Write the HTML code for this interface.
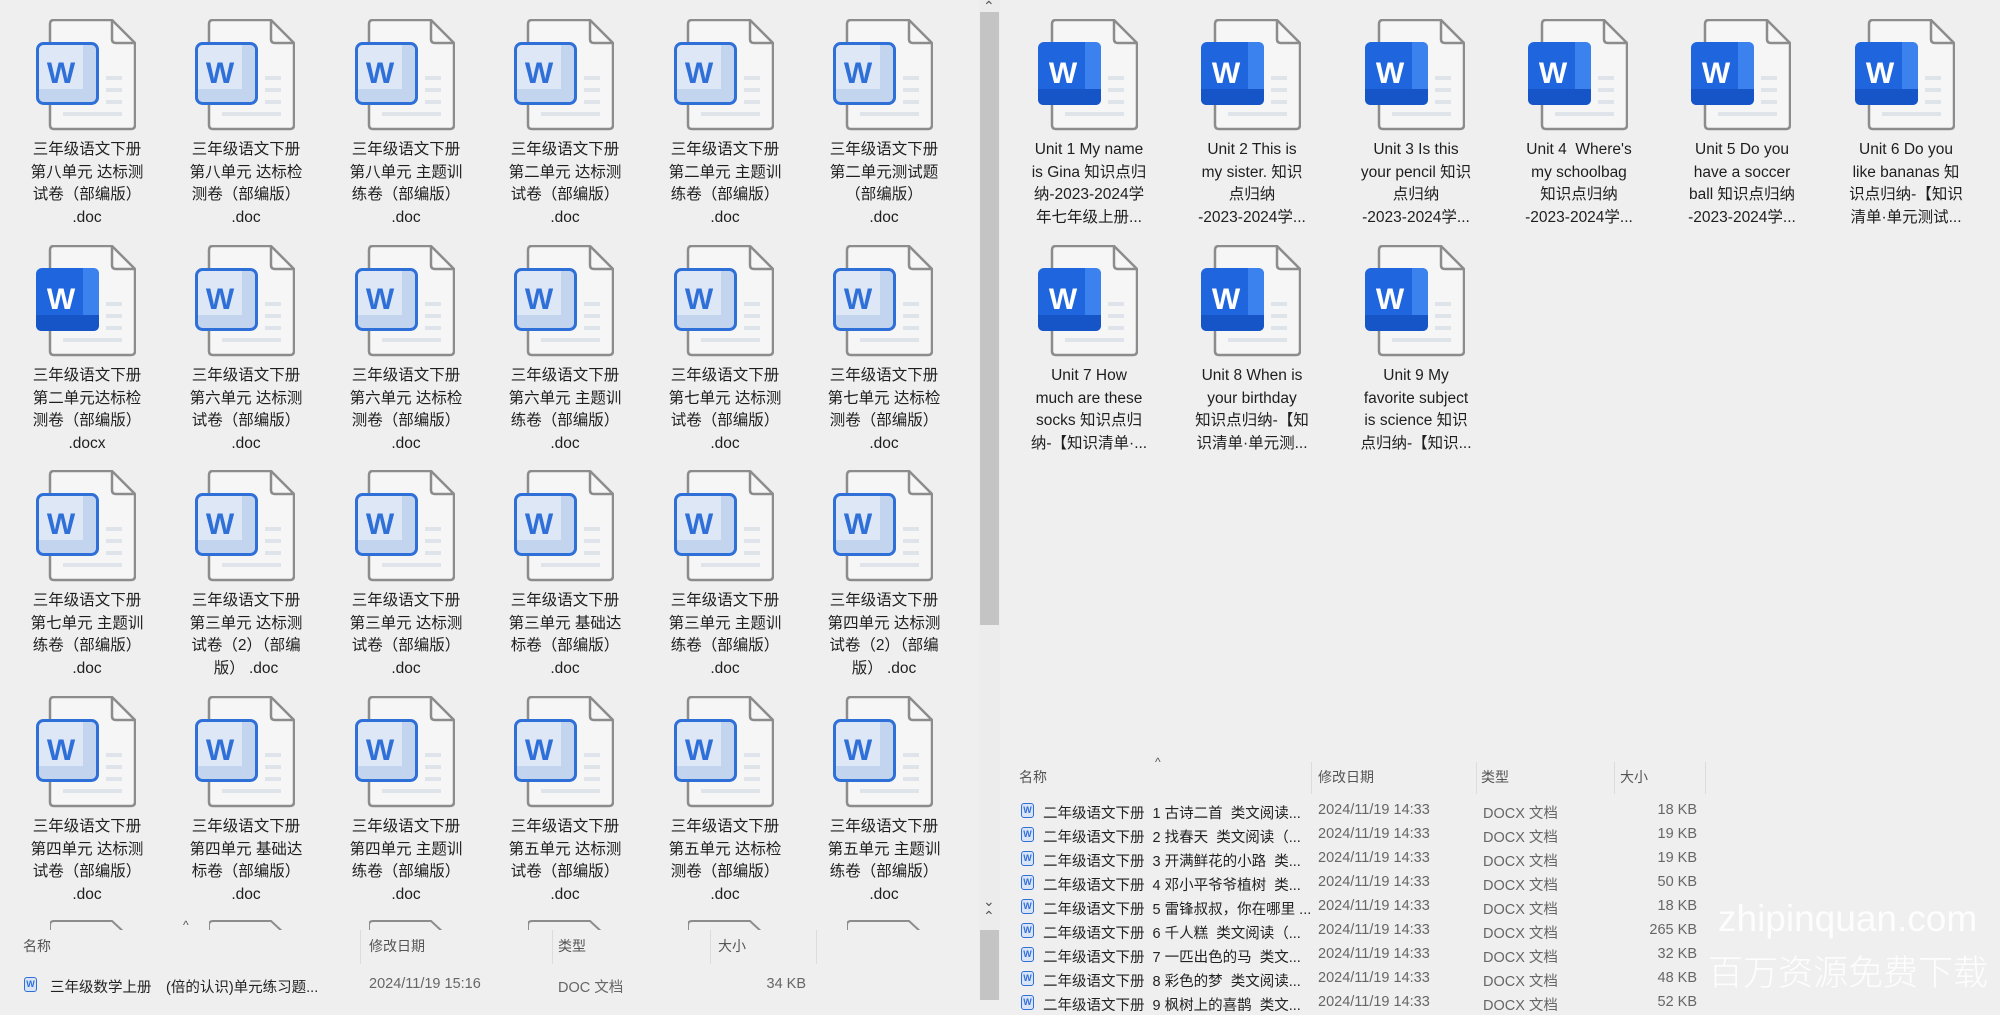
<!DOCTYPE html>
<html><head><meta charset="utf-8">
<style>
*{margin:0;padding:0;box-sizing:border-box}
body{width:2000px;height:1000px;background:#efefef;position:relative;overflow:hidden;font-family:"Liberation Sans","Noto Sans CJK SC",sans-serif;color:#222}
.it{position:absolute;width:160px}
.it svg{position:absolute;left:29px;top:0;width:100px;height:112px}
.it .w{position:absolute;left:29px;top:38px;width:50px;text-align:center;font:bold 30px "Liberation Sans",sans-serif;color:#2f6fd8}
.it.f .w{color:#fff}
.it .t{position:absolute;top:120px;left:0;width:160px;text-align:center;font-size:15.5px;line-height:22.5px;color:#1e1e1e;white-space:nowrap}
.abs{position:absolute;white-space:nowrap}
.hd{font-size:14px;color:#555}
.row{font-size:14.5px;color:#222}
.gray{color:#666}
.si{position:absolute;width:13px;height:15px;border:1.5px solid #2f6fd8;border-radius:3px;background:#d9e5f7;font:bold 9px "Liberation Sans",sans-serif;color:#2f6fd8;text-align:center;line-height:12px}
.vd{position:absolute;width:1px;background:#dcdcdc}
.pt{position:absolute;top:2px;width:86px;height:14px}
</style></head><body>
<svg width="0" height="0" style="position:absolute">
<defs>
<symbol id="doc" viewBox="0 0 100 112"><path d="M18,1H76L99,24V106Q99,110 95,110H18Q14,110 14,106V5Q14,1 18,1Z" fill="#f6f6f6" stroke="#8c8c8c" stroke-width="2.5"/><path d="M76,1V20Q76,24 80,24H99" fill="none" stroke="#8c8c8c" stroke-width="2.5"/><g stroke="#dfe3ea" stroke-width="4"><line x1="70" y1="59" x2="86" y2="59"/><line x1="70" y1="71" x2="86" y2="71"/><line x1="70" y1="83" x2="86" y2="83"/><line x1="27" y1="95" x2="86" y2="95"/></g></symbol>
<symbol id="o" viewBox="0 0 100 112"><use href="#doc"/><rect x="1.5" y="24.5" width="60" height="60" rx="6" fill="#dde7f6"/><rect x="47" y="26" width="13" height="57" fill="#c3d4ef"/><rect x="3" y="70" width="57" height="13" fill="#c3d4ef"/><rect x="1.5" y="24.5" width="60" height="60" rx="6" fill="none" stroke="#2f6fd8" stroke-width="3"/></symbol>
<symbol id="fl" viewBox="0 0 100 112"><use href="#doc"/><rect x="0" y="23" width="63" height="63" rx="6" fill="#1f66de"/><path d="M47,23H57Q63,23 63,29V80Q63,86 57,86H47Z" fill="#3c82ee"/><path d="M0,70H63V80Q63,86 57,86H6Q0,86 0,80Z" fill="#1655c8"/></symbol>
</defs></svg>

<!-- scrollbar left -->
<div style="position:absolute;left:979px;top:0;width:21px;height:1000px;background:#ececec"></div>
<div style="position:absolute;left:980px;top:12px;width:19px;height:613px;background:#c4c4c4"></div>
<div class="abs" style="left:983px;top:-2px;font-size:14px;color:#555">&#8963;</div>
<div class="abs" style="left:983px;top:893px;font-size:14px;color:#555">&#8964;</div>
<div class="abs" style="left:983px;top:908px;font-size:14px;color:#555">&#8963;</div>
<div style="position:absolute;left:980px;top:930px;width:19px;height:70px;background:#c4c4c4"></div>

<!-- row 1 -->
<div class="it" style="left:7px;top:19px"><svg><use href="#o"/></svg><div class="w">W</div><div class="t">三年级语文下册<br>第八单元 达标测<br>试卷（部编版）<br>.doc</div></div>
<div class="it" style="left:166px;top:19px"><svg><use href="#o"/></svg><div class="w">W</div><div class="t">三年级语文下册<br>第八单元 达标检<br>测卷（部编版）<br>.doc</div></div>
<div class="it" style="left:326px;top:19px"><svg><use href="#o"/></svg><div class="w">W</div><div class="t">三年级语文下册<br>第八单元 主题训<br>练卷（部编版）<br>.doc</div></div>
<div class="it" style="left:485px;top:19px"><svg><use href="#o"/></svg><div class="w">W</div><div class="t">三年级语文下册<br>第二单元 达标测<br>试卷（部编版）<br>.doc</div></div>
<div class="it" style="left:645px;top:19px"><svg><use href="#o"/></svg><div class="w">W</div><div class="t">三年级语文下册<br>第二单元 主题训<br>练卷（部编版）<br>.doc</div></div>
<div class="it" style="left:804px;top:19px"><svg><use href="#o"/></svg><div class="w">W</div><div class="t">三年级语文下册<br>第二单元测试题<br>（部编版）<br>.doc</div></div>
<!-- row 2 -->
<div class="it f" style="left:7px;top:245px"><svg><use href="#fl"/></svg><div class="w">W</div><div class="t">三年级语文下册<br>第二单元达标检<br>测卷（部编版）<br>.docx</div></div>
<div class="it" style="left:166px;top:245px"><svg><use href="#o"/></svg><div class="w">W</div><div class="t">三年级语文下册<br>第六单元 达标测<br>试卷（部编版）<br>.doc</div></div>
<div class="it" style="left:326px;top:245px"><svg><use href="#o"/></svg><div class="w">W</div><div class="t">三年级语文下册<br>第六单元 达标检<br>测卷（部编版）<br>.doc</div></div>
<div class="it" style="left:485px;top:245px"><svg><use href="#o"/></svg><div class="w">W</div><div class="t">三年级语文下册<br>第六单元 主题训<br>练卷（部编版）<br>.doc</div></div>
<div class="it" style="left:645px;top:245px"><svg><use href="#o"/></svg><div class="w">W</div><div class="t">三年级语文下册<br>第七单元 达标测<br>试卷（部编版）<br>.doc</div></div>
<div class="it" style="left:804px;top:245px"><svg><use href="#o"/></svg><div class="w">W</div><div class="t">三年级语文下册<br>第七单元 达标检<br>测卷（部编版）<br>.doc</div></div>
<!-- row 3 -->
<div class="it" style="left:7px;top:470px"><svg><use href="#o"/></svg><div class="w">W</div><div class="t">三年级语文下册<br>第七单元 主题训<br>练卷（部编版）<br>.doc</div></div>
<div class="it" style="left:166px;top:470px"><svg><use href="#o"/></svg><div class="w">W</div><div class="t">三年级语文下册<br>第三单元 达标测<br>试卷（2）（部编<br>版） .doc</div></div>
<div class="it" style="left:326px;top:470px"><svg><use href="#o"/></svg><div class="w">W</div><div class="t">三年级语文下册<br>第三单元 达标测<br>试卷（部编版）<br>.doc</div></div>
<div class="it" style="left:485px;top:470px"><svg><use href="#o"/></svg><div class="w">W</div><div class="t">三年级语文下册<br>第三单元 基础达<br>标卷（部编版）<br>.doc</div></div>
<div class="it" style="left:645px;top:470px"><svg><use href="#o"/></svg><div class="w">W</div><div class="t">三年级语文下册<br>第三单元 主题训<br>练卷（部编版）<br>.doc</div></div>
<div class="it" style="left:804px;top:470px"><svg><use href="#o"/></svg><div class="w">W</div><div class="t">三年级语文下册<br>第四单元 达标测<br>试卷（2）（部编<br>版） .doc</div></div>
<!-- row 4 -->
<div class="it" style="left:7px;top:696px"><svg><use href="#o"/></svg><div class="w">W</div><div class="t">三年级语文下册<br>第四单元 达标测<br>试卷（部编版）<br>.doc</div></div>
<div class="it" style="left:166px;top:696px"><svg><use href="#o"/></svg><div class="w">W</div><div class="t">三年级语文下册<br>第四单元 基础达<br>标卷（部编版）<br>.doc</div></div>
<div class="it" style="left:326px;top:696px"><svg><use href="#o"/></svg><div class="w">W</div><div class="t">三年级语文下册<br>第四单元 主题训<br>练卷（部编版）<br>.doc</div></div>
<div class="it" style="left:485px;top:696px"><svg><use href="#o"/></svg><div class="w">W</div><div class="t">三年级语文下册<br>第五单元 达标测<br>试卷（部编版）<br>.doc</div></div>
<div class="it" style="left:645px;top:696px"><svg><use href="#o"/></svg><div class="w">W</div><div class="t">三年级语文下册<br>第五单元 达标检<br>测卷（部编版）<br>.doc</div></div>
<div class="it" style="left:804px;top:696px"><svg><use href="#o"/></svg><div class="w">W</div><div class="t">三年级语文下册<br>第五单元 主题训<br>练卷（部编版）<br>.doc</div></div>

<!-- row 5 partial tops -->
<div style="position:absolute;left:0;top:918px;width:979px;height:14px">
<svg class="pt" style="left:50px" viewBox="0 0 86 14"><path d="M0,14V5Q0,1 4,1H62L76,14" fill="none" stroke="#8c8c8c" stroke-width="2"/></svg>
<svg class="pt" style="left:209px" viewBox="0 0 86 14"><path d="M0,14V5Q0,1 4,1H62L76,14" fill="none" stroke="#8c8c8c" stroke-width="2"/></svg>
<svg class="pt" style="left:369px" viewBox="0 0 86 14"><path d="M0,14V5Q0,1 4,1H62L76,14" fill="none" stroke="#8c8c8c" stroke-width="2"/></svg>
<svg class="pt" style="left:528px" viewBox="0 0 86 14"><path d="M0,14V5Q0,1 4,1H62L76,14" fill="none" stroke="#8c8c8c" stroke-width="2"/></svg>
<svg class="pt" style="left:688px" viewBox="0 0 86 14"><path d="M0,14V5Q0,1 4,1H62L76,14" fill="none" stroke="#8c8c8c" stroke-width="2"/></svg>
<svg class="pt" style="left:847px" viewBox="0 0 86 14"><path d="M0,14V5Q0,1 4,1H62L76,14" fill="none" stroke="#8c8c8c" stroke-width="2"/></svg>
</div>
<!-- left details pane -->
<div style="position:absolute;left:0;top:930px;width:979px;height:70px;background:#efefef"></div>
<div class="abs hd" style="left:183px;top:918px;font-size:12px">^</div>
<div class="abs hd" style="left:23px;top:936px">名称</div>
<div class="vd" style="left:360px;top:930px;height:34px"></div>
<div class="abs hd" style="left:369px;top:936px">修改日期</div>
<div class="vd" style="left:552px;top:930px;height:34px"></div>
<div class="abs hd" style="left:558px;top:936px">类型</div>
<div class="vd" style="left:710px;top:930px;height:34px"></div>
<div class="abs hd" style="left:718px;top:936px">大小</div>
<div class="vd" style="left:816px;top:930px;height:34px"></div>
<div class="si" style="left:24px;top:977px">W</div>
<div class="abs row" style="left:50px;top:976px">三年级数学上册　(倍的认识)单元练习题...</div>
<div class="abs row gray" style="left:369px;top:976px">2024/11/19 15:16</div>
<div class="abs row gray" style="left:558px;top:976px">DOC 文档</div>
<div class="abs row gray" style="left:706px;top:976px;width:100px;text-align:right">34 KB</div>

<!-- RIGHT GRID -->
<div class="it f" style="left:1009px;top:19px"><svg><use href="#fl"/></svg><div class="w">W</div><div class="t">Unit 1 My name<br>is Gina 知识点归<br>纳-2023-2024学<br>年七年级上册...</div></div>
<div class="it f" style="left:1172px;top:19px"><svg><use href="#fl"/></svg><div class="w">W</div><div class="t">Unit 2 This is<br>my sister. 知识<br>点归纳<br>-2023-2024学...</div></div>
<div class="it f" style="left:1336px;top:19px"><svg><use href="#fl"/></svg><div class="w">W</div><div class="t">Unit 3 Is this<br>your pencil 知识<br>点归纳<br>-2023-2024学...</div></div>
<div class="it f" style="left:1499px;top:19px"><svg><use href="#fl"/></svg><div class="w">W</div><div class="t">Unit 4&nbsp; Where's<br>my schoolbag<br>知识点归纳<br>-2023-2024学...</div></div>
<div class="it f" style="left:1662px;top:19px"><svg><use href="#fl"/></svg><div class="w">W</div><div class="t">Unit 5 Do you<br>have a soccer<br>ball 知识点归纳<br>-2023-2024学...</div></div>
<div class="it f" style="left:1826px;top:19px"><svg><use href="#fl"/></svg><div class="w">W</div><div class="t">Unit 6 Do you<br>like bananas 知<br>识点归纳-【知识<br>清单·单元测试...</div></div>
<div class="it f" style="left:1009px;top:245px"><svg><use href="#fl"/></svg><div class="w">W</div><div class="t">Unit 7 How<br>much are these<br>socks 知识点归<br>纳-【知识清单·...</div></div>
<div class="it f" style="left:1172px;top:245px"><svg><use href="#fl"/></svg><div class="w">W</div><div class="t">Unit 8 When is<br>your birthday<br>知识点归纳-【知<br>识清单·单元测...</div></div>
<div class="it f" style="left:1336px;top:245px"><svg><use href="#fl"/></svg><div class="w">W</div><div class="t">Unit 9 My<br>favorite subject<br>is science 知识<br>点归纳-【知识...</div></div>

<!-- right details -->
<div class="abs hd" style="left:1155px;top:755px;font-size:12px">^</div>
<div class="abs hd" style="left:1019px;top:767px">名称</div>
<div class="vd" style="left:1311px;top:762px;height:32px"></div>
<div class="abs hd" style="left:1318px;top:767px">修改日期</div>
<div class="vd" style="left:1476px;top:762px;height:32px"></div>
<div class="abs hd" style="left:1481px;top:767px">类型</div>
<div class="vd" style="left:1614px;top:762px;height:32px"></div>
<div class="abs hd" style="left:1620px;top:767px">大小</div>
<div class="vd" style="left:1705px;top:762px;height:32px"></div>

<div class="si" style="left:1021px;top:803px">W</div><div class="abs row" style="left:1043px;top:802px">二年级语文下册&nbsp; 1 古诗二首&nbsp; 类文阅读...</div><div class="abs row gray" style="left:1318px;top:802px">2024/11/19 14:33</div><div class="abs row gray" style="left:1483px;top:802px">DOCX 文档</div><div class="abs row gray" style="left:1597px;top:802px;width:100px;text-align:right">18 KB</div>
<div class="si" style="left:1021px;top:827px">W</div><div class="abs row" style="left:1043px;top:826px">二年级语文下册&nbsp; 2 找春天&nbsp; 类文阅读（...</div><div class="abs row gray" style="left:1318px;top:826px">2024/11/19 14:33</div><div class="abs row gray" style="left:1483px;top:826px">DOCX 文档</div><div class="abs row gray" style="left:1597px;top:826px;width:100px;text-align:right">19 KB</div>
<div class="si" style="left:1021px;top:851px">W</div><div class="abs row" style="left:1043px;top:850px">二年级语文下册&nbsp; 3 开满鲜花的小路&nbsp; 类...</div><div class="abs row gray" style="left:1318px;top:850px">2024/11/19 14:33</div><div class="abs row gray" style="left:1483px;top:850px">DOCX 文档</div><div class="abs row gray" style="left:1597px;top:850px;width:100px;text-align:right">19 KB</div>
<div class="si" style="left:1021px;top:875px">W</div><div class="abs row" style="left:1043px;top:874px">二年级语文下册&nbsp; 4 邓小平爷爷植树&nbsp; 类...</div><div class="abs row gray" style="left:1318px;top:874px">2024/11/19 14:33</div><div class="abs row gray" style="left:1483px;top:874px">DOCX 文档</div><div class="abs row gray" style="left:1597px;top:874px;width:100px;text-align:right">50 KB</div>
<div class="si" style="left:1021px;top:899px">W</div><div class="abs row" style="left:1043px;top:898px">二年级语文下册&nbsp; 5 雷锋叔叔，你在哪里 ...</div><div class="abs row gray" style="left:1318px;top:898px">2024/11/19 14:33</div><div class="abs row gray" style="left:1483px;top:898px">DOCX 文档</div><div class="abs row gray" style="left:1597px;top:898px;width:100px;text-align:right">18 KB</div>
<div class="si" style="left:1021px;top:923px">W</div><div class="abs row" style="left:1043px;top:922px">二年级语文下册&nbsp; 6 千人糕&nbsp; 类文阅读（...</div><div class="abs row gray" style="left:1318px;top:922px">2024/11/19 14:33</div><div class="abs row gray" style="left:1483px;top:922px">DOCX 文档</div><div class="abs row gray" style="left:1597px;top:922px;width:100px;text-align:right">265 KB</div>
<div class="si" style="left:1021px;top:947px">W</div><div class="abs row" style="left:1043px;top:946px">二年级语文下册&nbsp; 7 一匹出色的马&nbsp; 类文...</div><div class="abs row gray" style="left:1318px;top:946px">2024/11/19 14:33</div><div class="abs row gray" style="left:1483px;top:946px">DOCX 文档</div><div class="abs row gray" style="left:1597px;top:946px;width:100px;text-align:right">32 KB</div>
<div class="si" style="left:1021px;top:971px">W</div><div class="abs row" style="left:1043px;top:970px">二年级语文下册&nbsp; 8 彩色的梦&nbsp; 类文阅读...</div><div class="abs row gray" style="left:1318px;top:970px">2024/11/19 14:33</div><div class="abs row gray" style="left:1483px;top:970px">DOCX 文档</div><div class="abs row gray" style="left:1597px;top:970px;width:100px;text-align:right">48 KB</div>
<div class="si" style="left:1021px;top:995px">W</div><div class="abs row" style="left:1043px;top:994px">二年级语文下册&nbsp; 9 枫树上的喜鹊&nbsp; 类文...</div><div class="abs row gray" style="left:1318px;top:994px">2024/11/19 14:33</div><div class="abs row gray" style="left:1483px;top:994px">DOCX 文档</div><div class="abs row gray" style="left:1597px;top:994px;width:100px;text-align:right">52 KB</div>

<!-- watermark -->
<div class="abs" style="left:1718px;top:898px;font-size:37px;color:#ffffff;opacity:.9;font-family:'Liberation Sans',sans-serif">zhipinquan.com</div>
<div class="abs" style="left:1708px;top:945px;font-size:35px;color:#ffffff;opacity:.9;font-family:'Noto Sans CJK SC',sans-serif;font-weight:300">百万资源免费下载</div>

</body></html>
